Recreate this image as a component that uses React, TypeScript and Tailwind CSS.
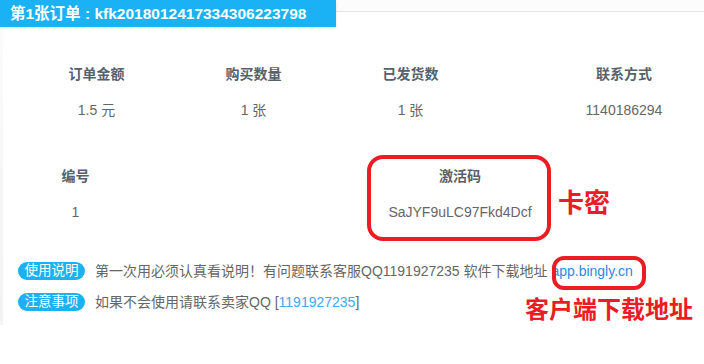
import React from "react";

const font = { fontFamily: '"Liberation Sans", "Noto Sans CJK SC", sans-serif' };

const summary = [
  { label: "订单金额", value: "1.5 元" },
  { label: "购买数量", value: "1 张" },
  { label: "已发货数", value: "1 张" },
];

function Badge({ text }: { text: string }) {
  return (
    <span className="flex h-[18px] w-[67px] shrink-0 items-center justify-center rounded-full bg-[#1db1f4] text-[13.5px] leading-none text-white">
      {text}
    </span>
  );
}

export default function App() {
  return (
    <div className="relative h-[364px] w-[704px] overflow-hidden bg-white" style={font}>
      <div className="bg-gradient-to-b from-[#fcfcfc] to-[#f3f3f3] pt-[11px] pl-[3px] bg-[#f2f2f2]">
        <div className="border-t border-[#e4e4e4] bg-white pl-[15px] pt-[52px] pb-[14px]">
          {/* order summary */}
          <div className="flex text-[14px] leading-[20px]">
            {summary.map((s) => (
              <div key={s.label} className="flex w-[157px] flex-col items-center">
                <span className="font-bold text-[#56616c]">{s.label}</span>
                <span className="mt-[16px] text-[#666]">{s.value}</span>
              </div>
            ))}
            <div className="ml-[57px] flex w-[156px] flex-col items-center">
              <span className="font-bold text-[#56616c]">联系方式</span>
              <span className="mt-[16px] text-[#666]">1140186294</span>
            </div>
          </div>

          {/* card row */}
          <div className="mt-[46px] flex text-[14px] leading-[20px]">
            <div className="flex w-[115px] flex-col items-center">
              <span className="font-bold text-[#56616c]">编号</span>
              <span className="mt-[16px] text-[#666]">1</span>
            </div>
            <div className="ml-[227px] flex w-[200px] flex-col items-center">
              <span className="font-bold text-[#56616c]">激活码</span>
              <span className="mt-[16px] text-[#666]">SaJYF9uLC97Fkd4Dcf</span>
            </div>
          </div>

          {/* notes */}
          <div className="mt-[40px] flex items-center gap-[10px] text-[14px] leading-[18px] text-[#666]">
            <Badge text="使用说明" />
            <span className="whitespace-nowrap">
              第一次用必须认真看说明！有问题联系客服QQ1191927235 软件下载地址 <span className="text-[#2b8ae2]">app.bingly.cn</span>
            </span>
          </div>
          <div className="mt-[13px] flex items-center gap-[10px] text-[14px] leading-[18px] text-[#666]">
            <Badge text="注意事项" />
            <span className="whitespace-nowrap">
              如果不会使用请联系卖家QQ [<span className="text-[#45a6ea]">1191927235</span>]
            </span>
          </div>
        </div>
      </div>

      {/* order tab */}
      <div className="absolute left-0 top-0 flex h-[27px] w-[336px] items-center bg-[#1ab2f4] pl-[10px] text-[15.5px] font-bold text-white shadow-[0_1px_3px_rgba(0,0,0,0.12)]">
        第1张订单 : kfk2018012417334306223798
      </div>

      {/* red annotations */}
      <div className="absolute left-[367px] top-[155px] h-[86px] w-[184px] rounded-[16px] border-[4px] border-[#ec1c24]" />
      <div className="absolute left-[558px] top-[188px] text-[26px] font-bold leading-[30px] text-[#ec1c24]">卡密</div>
      <div className="absolute left-[552px] top-[256px] h-[34px] w-[94px] rounded-[12px] border-[4px] border-[#ec1c24]" />
      <div className="absolute left-[525px] top-[296px] text-[24px] font-bold leading-[28px] text-[#ec1c24]">客户端下载地址</div>
    </div>
  );
}
